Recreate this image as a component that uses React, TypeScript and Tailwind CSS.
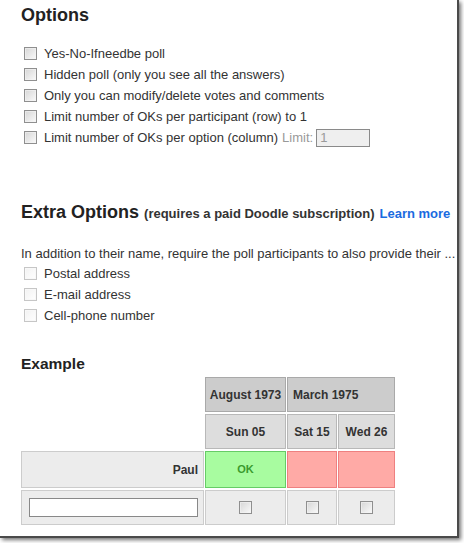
import React from "react";

function Box({ light = false }: { light?: boolean }) {
  return (
    <span
      className={
        "inline-block shrink-0 w-[13px] h-[13px] border " +
        (light
          ? "border-[#c6c6c6] bg-gradient-to-br from-[#f2f2f2] to-[#ffffff]"
          : "border-[#8f8f8f] bg-gradient-to-br from-[#d6d6d6] to-[#fafafa]")
      }
    >
      <span className={"block w-full h-full border " + (light ? "border-[#f8f8f8]" : "border-[#f4f4f4]/60")} />
    </span>
  );
}

function Row({ children, light = false }: { children: React.ReactNode; light?: boolean }) {
  return (
    <div className="flex items-center h-[21px] pl-[3px] gap-[7px] whitespace-nowrap">
      <Box light={light} />
      <span>{children}</span>
    </div>
  );
}

export default function App() {
  return (
    <div className="w-[464px] h-[543px] bg-white overflow-hidden" style={{ fontFamily: '"Liberation Sans", Arial, sans-serif' }}>
      <div className="w-[459px] h-[538px] bg-white overflow-hidden border-r-2 border-b-2 border-[#4a4a4a] shadow-[2px_2px_4px_rgba(0,0,0,0.55)] text-[13px] text-[#333] pl-[21px]">
        <h2 className="text-[18px] font-bold leading-[22px] pt-[4px] text-[#222]">Options</h2>
        <div className="mt-[17px]">
          <Row>Yes-No-Ifneedbe poll</Row>
          <Row>Hidden poll (only you see all the answers)</Row>
          <Row>Only you can modify/delete votes and comments</Row>
          <Row>Limit number of OKs per participant (row) to 1</Row>
          <div className="flex items-center h-[21px] pl-[3px] gap-[7px] whitespace-nowrap">
            <Box />
            <span>Limit number of OKs per option (column)</span>
            <span className="text-[#999] -ml-[3px]">Limit:</span>
            <span className="-ml-[4px] w-[54px] h-[18px] border border-[#8a8a8a] bg-[#efefef] text-[#9a9a9a] pl-[3px] leading-[16px]">1</span>
          </div>
        </div>

        <h2 className="mt-[53px] text-[18px] font-bold leading-[22px] text-[#222] whitespace-nowrap">
          Extra Options{" "}
          <span className="text-[13px] text-[#333]">(requires a paid Doodle subscription)</span>{" "}
          <span className="text-[13px] text-[#1a6be0]">Learn more</span>
        </h2>
        <div className="mt-[20px] whitespace-nowrap h-[18px] leading-[18px]">
          In addition to their name, require the poll participants to also provide their ...
        </div>
        <div>
          <Row light>Postal address</Row>
          <Row light>E-mail address</Row>
          <Row light>Cell-phone number</Row>
        </div>

        <h2 className="mt-[28px] text-[15.5px] font-bold leading-[20px] text-[#222]">Example</h2>

        <div className="mt-[3px] grid grid-cols-[183px_81px_50px_57px] grid-rows-[35px_35px_37px_35px] gap-x-px gap-y-[2px] text-[12px] font-bold text-[#333]">
          <div />
          <div className="border border-[#a9a9a9] bg-[#cccccc] flex items-center justify-center">August 1973</div>
          <div className="col-span-2 border border-[#a9a9a9] bg-[#cccccc] flex items-center pl-[5px]">March 1975</div>

          <div />
          <div className="border border-[#b8b8b8] bg-[#dddddd] flex items-center justify-center">Sun 05</div>
          <div className="border border-[#b8b8b8] bg-[#dddddd] flex items-center justify-center">Sat 15</div>
          <div className="border border-[#b8b8b8] bg-[#dddddd] flex items-center justify-center">Wed 26</div>

          <div className="border border-[#cccccc] bg-[#ececec] flex items-center justify-end pr-[5px]">Paul</div>
          <div className="border border-[#66cc66] bg-[#a8fca0] flex items-center justify-center text-[11px] text-[#3a9a2e]">OK</div>
          <div className="border border-[#ee8080] bg-[#ffaaa6]" />
          <div className="border border-[#ee8080] bg-[#ffaaa6]" />

          <div className="border border-[#cccccc] bg-[#ececec] flex items-center pl-[7px]">
            <span className="block w-[169px] h-[19px] border border-[#888] bg-white" />
          </div>
          <div className="border border-[#cccccc] bg-[#ececec] flex items-center justify-center"><Box /></div>
          <div className="border border-[#cccccc] bg-[#ececec] flex items-center justify-center"><Box /></div>
          <div className="border border-[#cccccc] bg-[#ececec] flex items-center justify-center"><Box /></div>
        </div>
      </div>
    </div>
  );
}
